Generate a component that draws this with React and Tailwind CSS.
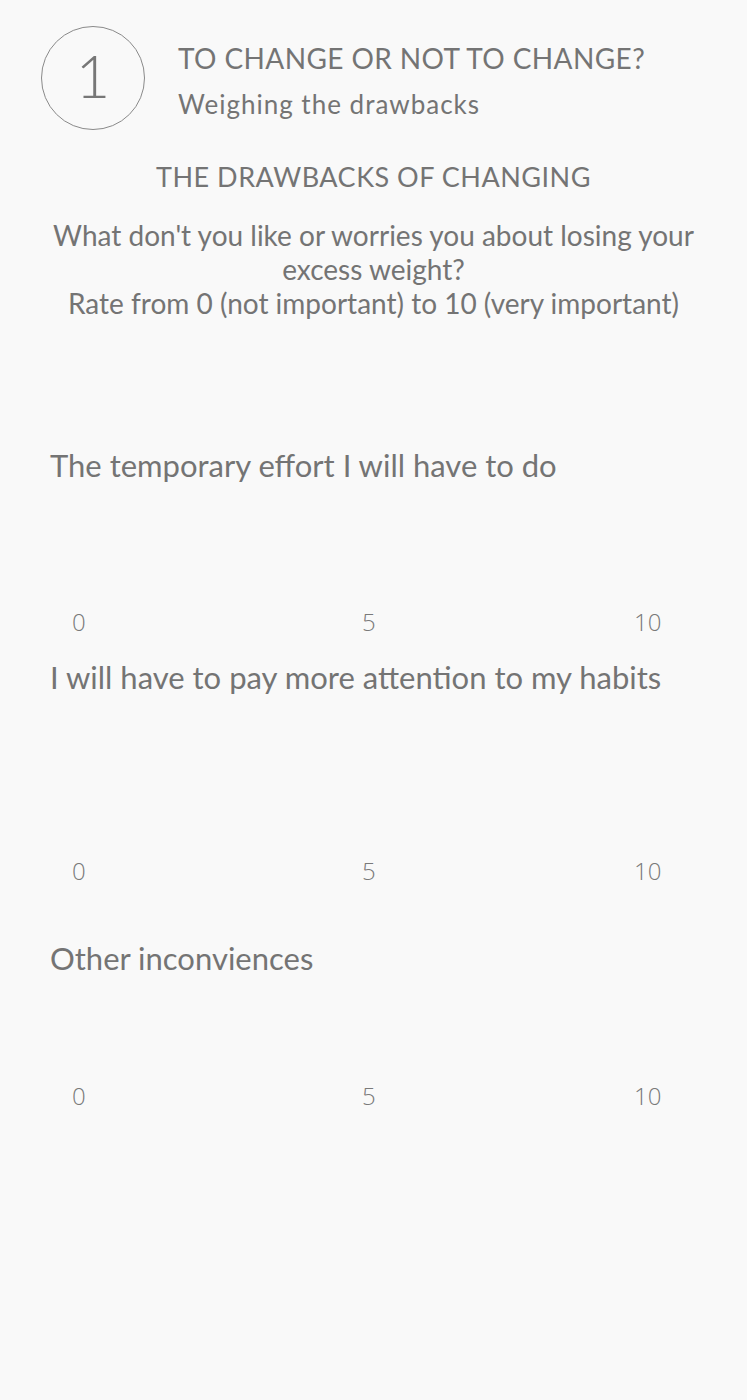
const items = [
  { label: "The temporary effort I will have to do", gapTop: "mt-[125px]", gapScale: "mt-[122px]" },
  { label: "I will have to pay more attention to my habits", gapTop: "mt-[20px]", gapScale: "mt-[159px]" },
  { label: "Other inconviences", gapTop: "mt-[52px]", gapScale: "mt-[103px]" },
];

function Scale() {
  return (
    <div className="flex pl-[72px] text-[24px] font-light leading-[30px] text-[#7a7a7a] [font-family:'Open_Sans',sans-serif]">
      <span className="w-[290px]">0</span>
      <span className="w-[272px]">5</span>
      <span>10</span>
    </div>
  );
}

export default function App() {
  return (
    <div className="min-h-[1400px] w-full bg-[#f9f9f9] text-[#747474] [font-family:Lato,'Noto_Sans',sans-serif]">
      <div className="flex items-start pl-[41px] pt-[26px]">
        <div className="flex h-[104px] w-[104px] flex-none items-center justify-center rounded-full border border-[#8a8a8a] pb-[6px] text-[60px] font-light leading-none text-[#777]">
          1
        </div>
        <div className="ml-[33px] pt-[15px]">
          <p className="text-[28px] leading-[34px] tracking-[0.4px]">TO CHANGE OR NOT TO CHANGE?</p>
          <p className="mt-[13px] text-[26px] leading-[32px] tracking-[1px]">Weighing the drawbacks</p>
        </div>
      </div>

      <p className="mt-[30px] text-center text-[27px] leading-[34px] tracking-[0.5px]">THE DRAWBACKS OF CHANGING</p>
      <div className="mt-[24px] px-[40px] text-center text-[28px] leading-[34px]">
        <p>What don't you like or worries you about losing your excess weight?</p>
        <p>Rate from 0 (not important) to 10 (very important)</p>
      </div>

      {items.map((item) => (
        <div key={item.label} className={item.gapTop}>
          <p className="pl-[50px] text-[31px] leading-[40px]">{item.label}</p>
          <div className={item.gapScale}>
            <Scale />
          </div>
        </div>
      ))}
    </div>
  );
}
